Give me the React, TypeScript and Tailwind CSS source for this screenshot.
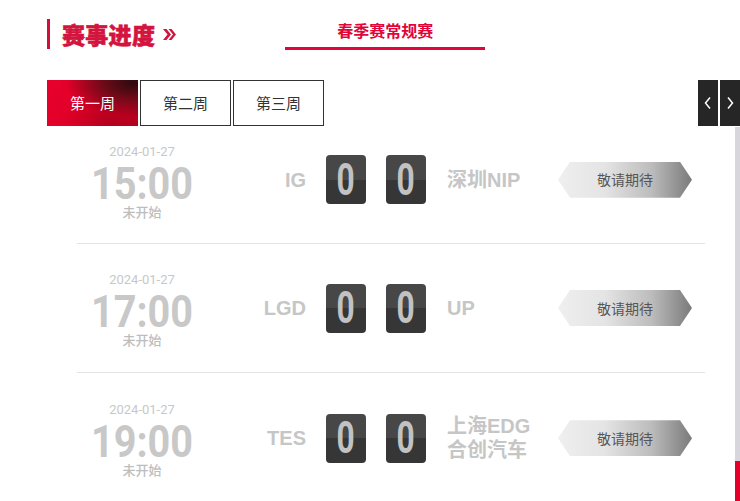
import React from "react";

type Match = { date: string; time: string; left: string; right: string[] };

const matches: Match[] = [
  { date: "2024-01-27", time: "15:00", left: "IG", right: ["深圳NIP"] },
  { date: "2024-01-27", time: "17:00", left: "LGD", right: ["UP"] },
  { date: "2024-01-27", time: "19:00", left: "TES", right: ["上海EDG", "合创汽车"] },
];

function ScoreBox() {
  return (
    <div className="w-[40px] h-[49px] rounded-[4px] overflow-hidden relative flex flex-col">
      <div className="h-1/2 bg-[#474747]" />
      <div className="h-1/2 bg-[#363636]" />
      <div className="absolute inset-0 flex items-center justify-center">
        <span className="inline-block scale-x-[0.72] text-[44px] leading-none font-bold text-[#c2c2c2] font-['Roboto']">0</span>
      </div>
    </div>
  );
}

function Row({ m, idx }: { m: Match; idx: number }) {
  const cls =
    idx === 0
      ? "flex items-center h-[119px] pb-[10px] border-b border-[#e4e4e4]"
      : idx === 1
      ? "flex items-center h-[129px] border-b border-[#e4e4e4]"
      : "flex items-center h-[129px] pt-[3px]";
  return (
    <div className={cls}>
      <div className="w-[130px] flex flex-col items-center pt-[4px]">
        <div className="h-[16px] text-[13px] leading-[16px] text-[#c8c8c8] font-['Roboto']">{m.date}</div>
        <div className="mt-[9px] h-[30px] flex items-center">
          <span className="inline-block scale-x-[0.88] text-[45px] leading-[30px] font-bold text-[#c8c8c8] font-['Roboto']">
            {m.time}
          </span>
        </div>
        <div className="mt-[5px] h-[16px] text-[13px] leading-[16px] font-medium text-[#bdbdbd]">未开始</div>
      </div>
      <div className="w-[99px] text-right text-[20px] font-bold text-[#c6c6c6] font-['Liberation_Sans','Noto_Sans_CJK_SC',sans-serif]">
        {m.left}
      </div>
      <div className="ml-[20px]">
        <ScoreBox />
      </div>
      <div className="ml-[20px]">
        <ScoreBox />
      </div>
      <div className="ml-[21px] w-[111px] flex flex-col text-[20px] leading-[24px] font-bold text-[#c6c6c6] font-['Liberation_Sans','Noto_Sans_CJK_SC',sans-serif]">
        {m.right.map((r) => (
          <span key={r}>{r}</span>
        ))}
      </div>
      <div className="w-[134px] h-[36px] flex items-center justify-center [clip-path:polygon(0_50%,12px_0,calc(100%-12px)_0,100%_50%,calc(100%-12px)_100%,12px_100%)] bg-[linear-gradient(to_right,#efefef_0%,#e4e4e4_35%,#bcbcbc_70%,#7a7a7a_100%)]">
        <span className="text-[14px] text-[#555555]">敬请期待</span>
      </div>
    </div>
  );
}

export default function App() {
  return (
    <div className="w-[740px] h-[501px] overflow-hidden bg-white flex flex-col font-['Noto_Sans_CJK_SC',sans-serif]">
      {/* header */}
      <div className="flex items-start pl-[47px] pt-[19px]">
        <div className="w-[3px] h-[30px] bg-[#d0103a]" />
        <div className="ml-[12px] h-[30px] flex items-center text-[23px] leading-[30px] font-black tracking-[0.3px] text-[#d3143e] [-webkit-text-stroke:0.6px_#d3143e]">
          赛事进度
        </div>
        <div className="ml-[8px] h-[30px] flex items-center">
          <svg width="14" height="11" viewBox="0 0 14 11">
            <polygon points="0,0 3.5,0 8,5.5 3.5,11 0,11 4.5,5.5" fill="#d3143e" />
            <polygon points="5.5,0 8.5,0 13,5.5 8.5,11 5.5,11 10,5.5" fill="#d3143e" />
          </svg>
        </div>
        <div className="ml-[108px] w-[200px] flex flex-col items-center pt-[3px]">
          <div className="text-[16px] leading-[16px] font-bold text-[#e1063a]">春季赛常规赛</div>
          <div className="mt-[9px] w-full h-[3px] bg-[#e1063a]" />
        </div>
      </div>

      {/* week tabs */}
      <div className="mt-[30px] flex pl-[47px] h-[46px]">
        <div className="w-[91px] h-full flex items-center justify-center text-[15px] text-white bg-[radial-gradient(ellipse_at_95%_5%,#2a0a0e_0%,#6e0a18_25%,transparent_55%),radial-gradient(ellipse_at_70%_90%,#b5001f_0%,transparent_50%),linear-gradient(120deg,#e8002c_0%,#dc0026_60%,#b0001c_100%)]">
          第一周
        </div>
        <div className="ml-[2px] w-[91px] h-full border border-[#333333] flex items-center justify-center text-[15px] text-[#333333]">
          第二周
        </div>
        <div className="ml-[2px] w-[91px] h-full border border-[#333333] flex items-center justify-center text-[15px] text-[#333333]">
          第三周
        </div>
        <div className="ml-auto flex gap-[2px]">
          <div className="w-[20px] h-full bg-[#262626] flex items-center justify-center">
            <svg width="8" height="14" viewBox="0 0 8 14">
              <polyline points="6,1.5 1.5,7 6,12.5" fill="none" stroke="#ffffff" strokeWidth="1.5" />
            </svg>
          </div>
          <div className="w-[20px] h-full bg-[#262626] flex items-center justify-center">
            <svg width="8" height="14" viewBox="0 0 8 14">
              <polyline points="2,1.5 6.5,7 2,12.5" fill="none" stroke="#ffffff" strokeWidth="1.5" />
            </svg>
          </div>
        </div>
      </div>

      {/* list */}
      <div className="flex-1 flex min-h-0">
        <div className="flex-1 pl-[77px] pr-[30px] flex flex-col">
          {matches.map((m, i) => (
            <Row key={i} m={m} idx={i} />
          ))}
        </div>
        <div className="mt-[1px] w-[5px] bg-[#d6d6dc] flex flex-col justify-end">
          <div className="h-[40px] bg-[#e4002b]" />
        </div>
      </div>
    </div>
  );
}
